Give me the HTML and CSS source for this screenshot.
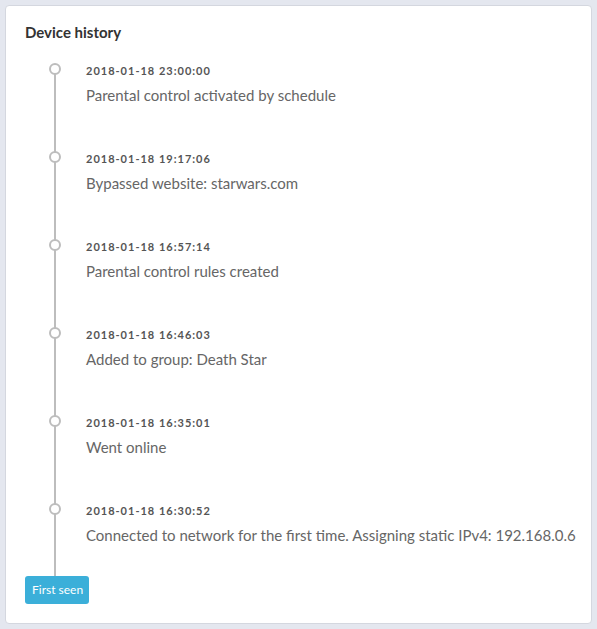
FILE: index.html
```html
<!DOCTYPE html>
<html>
<head>
<meta charset="utf-8">
<link rel="stylesheet" href="styles.css">
</head>
<body>
<div class="card">
  <h2 class="title">Device history</h2>
  <div class="timeline">
    <div class="item">
      <div class="time">2018-01-18 23:00:00</div>
      <div class="msg">Parental control activated by schedule</div>
    </div>
    <div class="item">
      <div class="time">2018-01-18 19:17:06</div>
      <div class="msg">Bypassed website: starwars.com</div>
    </div>
    <div class="item">
      <div class="time">2018-01-18 16:57:14</div>
      <div class="msg">Parental control rules created</div>
    </div>
    <div class="item">
      <div class="time">2018-01-18 16:46:03</div>
      <div class="msg">Added to group: Death Star</div>
    </div>
    <div class="item">
      <div class="time">2018-01-18 16:35:01</div>
      <div class="msg">Went online</div>
    </div>
    <div class="item last">
      <div class="time">2018-01-18 16:30:52</div>
      <div class="msg">Connected to network for the first time. Assigning static IPv4: 192.168.0.6</div>
    </div>
    <span class="badge">First seen</span>
  </div>
</div>
</body>
</html>
```
FILE: styles.css
```css
html, body {
  margin: 0;
  padding: 0;
}
body {
  background: #e4e7ef;
  padding: 5px;
  font-family: Lato, "Noto Sans", sans-serif;
}
.card {
  background: #fff;
  border: 1px solid #d4d7df;
  border-radius: 4px;
  padding: 16px 19px 19px;
  box-sizing: border-box;
  height: 619px;
}
.title {
  margin: 0 0 21px;
  font-size: 15px;
  line-height: 20px;
  font-weight: 700;
  color: #333;
}
.timeline {
  position: relative;
}
.timeline::before {
  content: "";
  position: absolute;
  left: 29px;
  top: 5px;
  bottom: 20px;
  width: 2px;
  background: #bdbdbd;
}
.item {
  position: relative;
  padding-left: 61px;
  height: 88px;
}
.item.last {
  height: 73px;
}
.item::before {
  content: "";
  position: absolute;
  left: 24px;
  top: 0;
  width: 8px;
  height: 8px;
  border: 2px solid #bdbdbd;
  border-radius: 50%;
  background: #fff;
  z-index: 1;
}
.time {
  font-size: 11px;
  line-height: 16px;
  font-weight: 700;
  letter-spacing: 1px;
  color: #555;
}
.msg {
  margin-top: 6px;
  font-size: 15px;
  line-height: 20px;
  color: #666;
  white-space: nowrap;
}
.badge {
  position: relative;
  z-index: 1;
  display: block;
  width: max-content;
  background: #3bafd9;
  color: #fff;
  font-size: 12px;
  line-height: 28px;
  height: 28px;
  padding: 0 6px 0 7px;
  border-radius: 3px;
}
```
